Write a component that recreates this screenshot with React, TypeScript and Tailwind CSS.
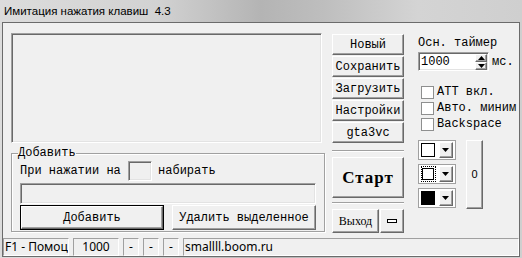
const mono = "font-['Liberation_Mono','DejaVu_Sans_Mono',monospace]";
const raised =
  "border border-t-white border-l-white border-b-[#696969] border-r-[#696969] shadow-[inset_-1px_-1px_0_#a0a0a0] bg-[#f0f0f0]";
const sunken =
  "border border-t-[#a0a0a0] border-l-[#a0a0a0] border-b-white border-r-white shadow-[inset_1px_1px_0_#696969,inset_-1px_-1px_0_#e3e3e3]";
const etched = "h-0 border-t border-t-[#a0a0a0] border-b border-b-white";
const statusCell =
  "border border-t-[#a0a0a0] border-l-[#a0a0a0] border-b-white border-r-white h-[18px] flex items-center overflow-hidden whitespace-nowrap";

function Btn({ label, className = "" }: { label: string; className?: string }) {
  return (
    <div className={`${raised} ${mono} flex items-center justify-center text-[12px] text-black ${className}`}>
      {label}
    </div>
  );
}

function Arrow({ up }: { up?: boolean }) {
  return (
    <svg width="7" height="4" viewBox="0 0 7 4">
      <path d={up ? "M0 4 L3.5 0 L7 4 Z" : "M0 0 L7 0 L3.5 4 Z"} fill="#000" />
    </svg>
  );
}

function Check({ label }: { label: string }) {
  return (
    <div className="flex items-center h-[16px]">
      <div className="w-[13px] h-[13px] ml-[3px] bg-white border border-[#8e8f8f]" />
      <span className={`${mono} text-[12px] ml-[3px] text-black`}>{label}</span>
    </div>
  );
}

function ColorCombo({ swatch }: { swatch: "white" | "focus" | "black" }) {
  return (
    <div className="w-[38px] h-[20px] bg-white border border-[#a0a0a0] flex items-center px-[2px] gap-[3px]">
      {swatch === "focus" ? (
        <div className="w-[16px] h-[16px] border border-dotted border-black flex items-center justify-center">
          <div className="w-[12px] h-[12px] bg-white border border-black" />
        </div>
      ) : (
        <div className="w-[16px] h-[16px] flex items-center justify-center">
          <div
            className={`w-[14px] h-[14px] border border-black ${swatch === "black" ? "bg-black" : "bg-white"}`}
          />
        </div>
      )}
      <div className={`${raised} w-[15px] h-[16px] flex items-center justify-center`}>
        <Arrow />
      </div>
    </div>
  );
}

export default function App() {
  return (
    <div className="w-[522px] h-[258px] overflow-hidden bg-[linear-gradient(to_right,#dcdcdc_0%,#d2d2d2_30%,#b4b4b4_50%,#bebebe_62%,#d4d4d4_80%,#cfcfcf_100%)] flex flex-col">
      {/* TITLE */}
      <div className="h-[22px] flex items-center pl-[4px] pt-[1px]">
        <span className="font-['Liberation_Sans',sans-serif] text-[11.5px] text-black whitespace-pre">
          Имитация нажатия клавиш  4.3
        </span>
      </div>

      {/* CLIENT */}
      <div className="mx-[2px] h-[235px] border border-[#6b6b6b] bg-[#f0f0f0] flex flex-col">
        <div className="h-[213px] flex pl-[8px] pt-[10px]">
          {/* LEFT */}
          <div className="w-[311px] flex flex-col">
            <div className={`${sunken} h-[110px] bg-[#f0f0f0]`} />
            <fieldset className="mt-[4px] h-[85px] border border-[#a0a0a0] shadow-[inset_1px_1px_0_white,1px_1px_0_white] px-[8px]">
              <legend className={`${mono} text-[12px] leading-[12px] text-black ml-[-2px] px-0`}>
                Добавить
              </legend>
              <div className="flex items-center h-[21px] mt-[1px]">
                <span className={`${mono} text-[12px] text-black whitespace-pre`}>При нажатии на </span>
                <div className={`${sunken} w-[24px] h-[20px] bg-[#f0f0f0]`} />
                <span className={`${mono} text-[12px] text-black ml-[6px]`}>набирать</span>
              </div>
              <div className={`${sunken} h-[21px] mt-[2px] bg-[#f0f0f0]`} />
              <div className="flex gap-[8px] mt-[1px]">
                <div className="border border-black w-[144px] h-[25px]">
                  <Btn label="Добавить" className="h-full w-full" />
                </div>
                <Btn label="Удалить выделенное" className="w-[144px] h-[25px]" />
              </div>
            </fieldset>
          </div>

          {/* BUTTONS */}
          <div className="w-[72px] ml-[10px] mt-[1px] flex flex-col">
            <div className="flex flex-col gap-px">
              {["Новый", "Сохранить", "Загрузить", "Настройки", "gta3vc"].map((b) => (
                <Btn key={b} label={b} className="h-[21px]" />
              ))}
            </div>
            <div className={`${etched} mt-[7px]`} />
            <div
              className={`${raised} mt-[5px] h-[41px] flex items-center justify-center font-['Liberation_Serif',serif] text-[17px] tracking-[1px] font-bold text-black`}
            >
              Старт
            </div>
            <div className={`${etched} mt-[4px]`} />
            <div className="flex mt-[5px] gap-px">
              <div
                className={`${raised} w-[47px] h-[24px] flex items-center justify-center font-['Liberation_Serif',serif] text-[12px] text-black`}
              >
                Выход
              </div>
              <div className={`${raised} w-[24px] h-[24px] flex items-center justify-center`}>
                <div className="w-[10px] h-[4px] border border-black bg-white" />
              </div>
            </div>
          </div>

          {/* RIGHT */}
          <div className="ml-[14px] flex flex-col">
            <div className={`${mono} text-[12px] leading-[14px] mt-[3px] text-black`}>Осн. таймер</div>
            <div className="flex items-center mt-[2px]">
              <div className={`${sunken} w-[71px] h-[19px] bg-white flex items-center justify-between pl-[2px] pr-[1px]`}>
                <span className={`${mono} text-[12px] text-black`}>1000</span>
                <div className="flex flex-col">
                  <div className={`${raised} w-[12px] h-[8px] flex items-center justify-center`}>
                    <Arrow up />
                  </div>
                  <div className={`${raised} w-[12px] h-[8px] flex items-center justify-center`}>
                    <Arrow />
                  </div>
                </div>
              </div>
              <span className={`${mono} text-[12px] ml-[3px] text-black`}>мс.</span>
            </div>
            <div className="mt-[13px] flex flex-col">
              <Check label="ATT вкл." />
              <Check label="Авто. миним" />
              <Check label="Backspace" />
            </div>
            <div className="flex mt-[8px]">
              <div className="flex flex-col gap-[4px]">
                <ColorCombo swatch="white" />
                <ColorCombo swatch="focus" />
                <ColorCombo swatch="black" />
              </div>
              <div
                className={`${raised} ml-[10px] w-[17px] h-[69px] flex items-center justify-center font-['Liberation_Sans',sans-serif] text-[11px] text-black`}
              >
                0
              </div>
            </div>
          </div>
        </div>

        {/* STATUS BAR */}
        <div className="flex-1 flex items-end gap-[4px] font-['Noto_Sans',sans-serif] text-[12px] text-black">
          <div className={`${statusCell} w-[66px] pl-[1px]`}>F1 - Помоц</div>
          <div className={`${statusCell} w-[46px] justify-center`}>1000</div>
          <div className={`${statusCell} w-[16px] justify-center`}>-</div>
          <div className={`${statusCell} w-[16px] justify-center`}>-</div>
          <div className={`${statusCell} w-[16px] justify-center`}>-</div>
          <div className={`${statusCell} flex-1 pl-[1px]`}>smallll.boom.ru</div>
        </div>
      </div>
    </div>
  );
}
